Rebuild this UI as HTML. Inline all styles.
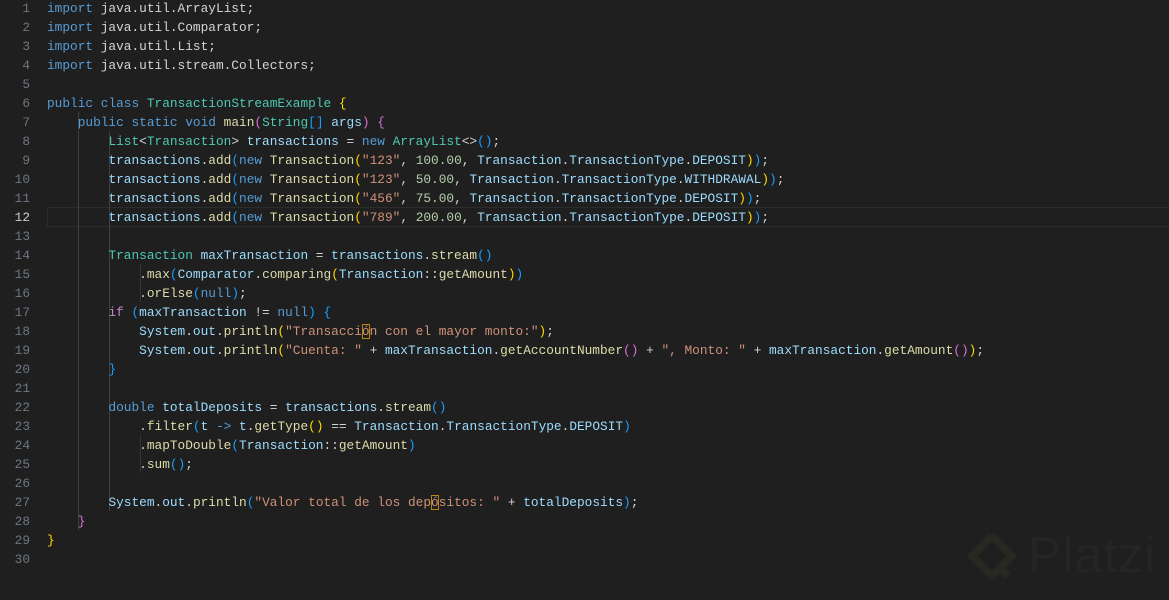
<!DOCTYPE html><html><head><meta charset="utf-8"><style>
body{margin:0;width:1169px;height:600px;background:#1f1f1f;overflow:hidden;position:relative;font-family:"Liberation Mono",monospace;font-size:12.8px;}
.g{position:absolute;left:0;top:-1.5px;width:30px;text-align:right;color:#6e7681;line-height:19px}
.g div{height:19px}
.c{position:absolute;left:47px;top:-1.5px;line-height:19px;color:#d4d4d4}
.c div{height:19px;white-space:pre}
.k{color:#569cd6}.p{color:#c586c0}.t{color:#4ec9b0}.f{color:#dcdcaa}.v{color:#9cdcfe}.s{color:#ce9178}.n{color:#b5cea8}
.b1{color:#ffd700}.b2{color:#da70d6}.b3{color:#179fff}
.cur{outline:1px solid #b8860b;outline-offset:-1px}
.ig{position:absolute;width:1px;background:#404040}
.hl{position:absolute;left:47px;top:207px;width:1122px;height:18px;border:1px solid #2c2c2c;border-right:none}
</style></head><body>
<div class="hl"></div>
<div class="ig" style="left:78px;top:112px;height:418px"></div>
<div class="ig" style="left:109px;top:131px;height:380px"></div>
<div class="ig" style="left:140px;top:264px;height:38px;background:#353535"></div>
<div class="ig" style="left:140px;top:435px;height:38px;background:#353535"></div>
<div class="g"><div>1</div><div>2</div><div>3</div><div>4</div><div>5</div><div>6</div><div>7</div><div>8</div><div>9</div><div>10</div><div>11</div><div style="color:#ccc">12</div><div>13</div><div>14</div><div>15</div><div>16</div><div>17</div><div>18</div><div>19</div><div>20</div><div>21</div><div>22</div><div>23</div><div>24</div><div>25</div><div>26</div><div>27</div><div>28</div><div>29</div><div>30</div></div>
<div class="c">
<div><span class="k">import</span> java.util.ArrayList;</div>
<div><span class="k">import</span> java.util.Comparator;</div>
<div><span class="k">import</span> java.util.List;</div>
<div><span class="k">import</span> java.util.stream.Collectors;</div>
<div></div>
<div><span class="k">public</span> <span class="k">class</span> <span class="t">TransactionStreamExample</span> <span class="b1">{</span></div>
<div>    <span class="k">public</span> <span class="k">static</span> <span class="k">void</span> <span class="f">main</span><span class="b2">(</span><span class="t">String</span><span class="b3">[]</span> <span class="v">args</span><span class="b2">)</span> <span class="b2">{</span></div>
<div>        <span class="t">List</span>&lt;<span class="t">Transaction</span>&gt; <span class="v">transactions</span> = <span class="k">new</span> <span class="t">ArrayList</span>&lt;&gt;<span class="b3">()</span>;</div>
<div>        <span class="v">transactions</span>.<span class="f">add</span><span class="b3">(</span><span class="k">new</span> <span class="f">Transaction</span><span class="b1">(</span><span class="s">"123"</span>, <span class="n">100.00</span>, <span class="v">Transaction</span>.<span class="v">TransactionType</span>.<span class="v">DEPOSIT</span><span class="b1">)</span><span class="b3">)</span>;</div>
<div>        <span class="v">transactions</span>.<span class="f">add</span><span class="b3">(</span><span class="k">new</span> <span class="f">Transaction</span><span class="b1">(</span><span class="s">"123"</span>, <span class="n">50.00</span>, <span class="v">Transaction</span>.<span class="v">TransactionType</span>.<span class="v">WITHDRAWAL</span><span class="b1">)</span><span class="b3">)</span>;</div>
<div>        <span class="v">transactions</span>.<span class="f">add</span><span class="b3">(</span><span class="k">new</span> <span class="f">Transaction</span><span class="b1">(</span><span class="s">"456"</span>, <span class="n">75.00</span>, <span class="v">Transaction</span>.<span class="v">TransactionType</span>.<span class="v">DEPOSIT</span><span class="b1">)</span><span class="b3">)</span>;</div>
<div>        <span class="v">transactions</span>.<span class="f">add</span><span class="b3">(</span><span class="k">new</span> <span class="f">Transaction</span><span class="b1">(</span><span class="s">"789"</span>, <span class="n">200.00</span>, <span class="v">Transaction</span>.<span class="v">TransactionType</span>.<span class="v">DEPOSIT</span><span class="b1">)</span><span class="b3">)</span>;</div>
<div></div>
<div>        <span class="t">Transaction</span> <span class="v">maxTransaction</span> = <span class="v">transactions</span>.<span class="f">stream</span><span class="b3">()</span></div>
<div>            .<span class="f">max</span><span class="b3">(</span><span class="v">Comparator</span>.<span class="f">comparing</span><span class="b1">(</span><span class="v">Transaction</span>::<span class="f">getAmount</span><span class="b1">)</span><span class="b3">)</span></div>
<div>            .<span class="f">orElse</span><span class="b3">(</span><span class="k">null</span><span class="b3">)</span>;</div>
<div>        <span class="p">if</span> <span class="b3">(</span><span class="v">maxTransaction</span> != <span class="k">null</span><span class="b3">)</span> <span class="b3">{</span></div>
<div>            <span class="v">System</span>.<span class="v">out</span>.<span class="f">println</span><span class="b1">(</span><span class="s">"Transacci<span class="cur">ó</span>n con el mayor monto:"</span><span class="b1">)</span>;</div>
<div>            <span class="v">System</span>.<span class="v">out</span>.<span class="f">println</span><span class="b1">(</span><span class="s">"Cuenta: "</span> + <span class="v">maxTransaction</span>.<span class="f">getAccountNumber</span><span class="b2">()</span> + <span class="s">", Monto: "</span> + <span class="v">maxTransaction</span>.<span class="f">getAmount</span><span class="b2">()</span><span class="b1">)</span>;</div>
<div>        <span class="b3">}</span></div>
<div></div>
<div>        <span class="k">double</span> <span class="v">totalDeposits</span> = <span class="v">transactions</span>.<span class="f">stream</span><span class="b3">()</span></div>
<div>            .<span class="f">filter</span><span class="b3">(</span><span class="v">t</span> <span class="k">-&gt;</span> <span class="v">t</span>.<span class="f">getType</span><span class="b1">()</span> == <span class="v">Transaction</span>.<span class="v">TransactionType</span>.<span class="v">DEPOSIT</span><span class="b3">)</span></div>
<div>            .<span class="f">mapToDouble</span><span class="b3">(</span><span class="v">Transaction</span>::<span class="f">getAmount</span><span class="b3">)</span></div>
<div>            .<span class="f">sum</span><span class="b3">()</span>;</div>
<div></div>
<div>        <span class="v">System</span>.<span class="v">out</span>.<span class="f">println</span><span class="b3">(</span><span class="s">"Valor total de los dep<span class="cur">ó</span>sitos: "</span> + <span class="v">totalDeposits</span><span class="b3">)</span>;</div>
<div>    <span class="b2">}</span></div>
<div><span class="b1">}</span></div>
<div></div>
</div>
<svg style="position:absolute;left:962px;top:530px" width="60" height="60" viewBox="0 0 60 60"><path d="M30 6 L50 26 L38 38 M30 6 L10 26 L30 46 L38 38 L46 46" fill="none" stroke="#272820" stroke-width="8" stroke-linejoin="round"/></svg>
<div style="position:absolute;left:1028px;top:526px;font-family:'Liberation Sans',sans-serif;font-size:50px;color:#252525;letter-spacing:1px">Platzi</div>
</body></html>
